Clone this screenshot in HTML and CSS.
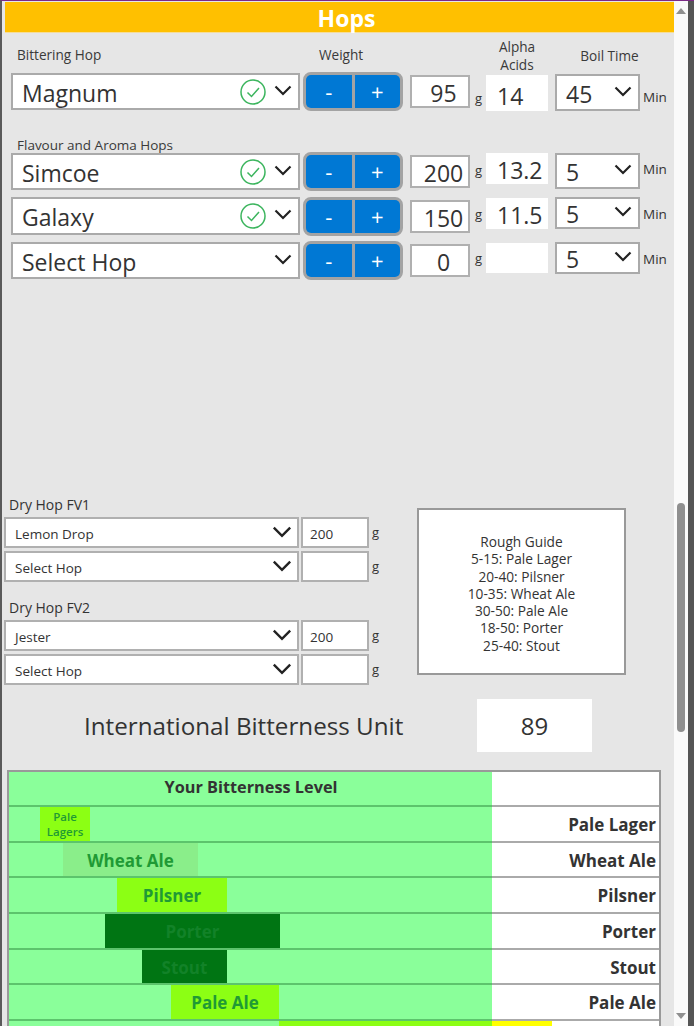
FILE: index.html
```html
<!DOCTYPE html>
<html lang="en">
<head>
<meta charset="utf-8">
<title>Hops</title>
<link rel="stylesheet" href="styles.css">
</head>
<body>
<svg class="defs" width="0" height="0" aria-hidden="true">
  <symbol id="chev" viewBox="0 0 18 11"><path d="M1.5 1.5 9 9l7.5-7.5" fill="none" stroke="#222" stroke-width="2.2"/></symbol>
  <symbol id="ok" viewBox="0 0 26 26"><circle cx="13" cy="13" r="12" fill="none" stroke="#3cb55e" stroke-width="1.5"/><path d="M7.5 13.5l4 4 7.5-8.5" fill="none" stroke="#3cb55e" stroke-width="1.5"/></symbol>
</svg>
<div class="window">
  <main class="app">
    <h1 class="title">Hops</h1>

    <div class="hop-grid labels">
      <div class="lbl lbl-hop">Bittering Hop</div>
      <div class="lbl lbl-weight">Weight</div>
      <div></div><div></div>
      <div class="lbl lbl-alpha">Alpha<br>Acids</div>
      <div class="lbl lbl-boil">Boil Time</div>
    </div>

    <div class="hop-grid row-a">
      <div class="select"><span>Magnum</span><svg class="ok"><use href="#ok"/></svg><svg class="chev"><use href="#chev"/></svg></div>
      <div class="stepper"><button class="step">-</button><button class="step">+</button></div>
      <div class="qty">95</div><div class="unit">g</div>
      <div class="alpha">14</div>
      <div class="boil"><span>45</span><svg class="chev"><use href="#chev"/></svg></div>
      <div class="min">Min</div>
    </div>

    <div class="lbl lbl-flavour">Flavour and Aroma Hops</div>

    <div class="hop-grid row-b">
      <div class="select"><span>Simcoe</span><svg class="ok"><use href="#ok"/></svg><svg class="chev"><use href="#chev"/></svg></div>
      <div class="stepper"><button class="step">-</button><button class="step">+</button></div>
      <div class="qty">200</div><div class="unit">g</div>
      <div class="alpha">13.2</div>
      <div class="boil"><span>5</span><svg class="chev"><use href="#chev"/></svg></div>
      <div class="min">Min</div>
    </div>
    <div class="hop-grid row-c">
      <div class="select"><span>Galaxy</span><svg class="ok"><use href="#ok"/></svg><svg class="chev"><use href="#chev"/></svg></div>
      <div class="stepper"><button class="step">-</button><button class="step">+</button></div>
      <div class="qty">150</div><div class="unit">g</div>
      <div class="alpha">11.5</div>
      <div class="boil"><span>5</span><svg class="chev"><use href="#chev"/></svg></div>
      <div class="min">Min</div>
    </div>
    <div class="hop-grid row-d">
      <div class="select"><span>Select Hop</span><svg class="chev"><use href="#chev"/></svg></div>
      <div class="stepper"><button class="step">-</button><button class="step">+</button></div>
      <div class="qty">0</div><div class="unit">g</div>
      <div class="alpha"></div>
      <div class="boil"><span>5</span><svg class="chev"><use href="#chev"/></svg></div>
      <div class="min">Min</div>
    </div>

    <section class="dry">
      <div class="dry-forms">
        <div class="dry-label">Dry Hop FV1</div>
        <div class="dry-row"><div class="dry-select"><span>Lemon Drop</span><svg class="chev"><use href="#chev"/></svg></div><div class="dry-qty">200</div><div class="dry-unit">g</div></div>
        <div class="dry-row"><div class="dry-select"><span>Select Hop</span><svg class="chev"><use href="#chev"/></svg></div><div class="dry-qty"></div><div class="dry-unit">g</div></div>
        <div class="dry-label dry-label-second">Dry Hop FV2</div>
        <div class="dry-row"><div class="dry-select"><span>Jester</span><svg class="chev"><use href="#chev"/></svg></div><div class="dry-qty">200</div><div class="dry-unit">g</div></div>
        <div class="dry-row"><div class="dry-select"><span>Select Hop</span><svg class="chev"><use href="#chev"/></svg></div><div class="dry-qty"></div><div class="dry-unit">g</div></div>
      </div>
      <div class="guide">Rough Guide<br>5-15: Pale Lager<br>20-40: Pilsner<br>10-35: Wheat Ale<br>30-50: Pale Ale<br>18-50: Porter<br>25-40: Stout</div>
    </section>

    <section class="ibu">
      <div class="ibu-label">International Bitterness Unit</div>
      <div class="ibu-value">89</div>
    </section>

    <section class="chart">
      <div class="chart-row chart-head"><div class="track"><b class="chart-title">Your Bitterness Level</b></div><div class="style"></div></div>
      <div class="chart-row"><div class="track"><div class="bar lime small" style="margin-left:31px;width:50px">Pale<br>Lagers</div></div><div class="style">Pale Lager</div></div>
      <div class="chart-row"><div class="track"><div class="bar wheat" style="margin-left:54px;width:135px">Wheat Ale</div></div><div class="style">Wheat Ale</div></div>
      <div class="chart-row"><div class="track"><div class="bar lime" style="margin-left:108px;width:110px">Pilsner</div></div><div class="style">Pilsner</div></div>
      <div class="chart-row"><div class="track"><div class="bar dark" style="margin-left:96px;width:175px">Porter</div></div><div class="style">Porter</div></div>
      <div class="chart-row"><div class="track"><div class="bar dark" style="margin-left:133px;width:85px">Stout</div></div><div class="style">Stout</div></div>
      <div class="chart-row"><div class="track"><div class="bar lime" style="margin-left:162px;width:108px">Pale Ale</div></div><div class="style">Pale Ale</div></div>
      <div class="chart-row"><div class="track"><div class="bar lime" style="margin-left:270px;width:213px"></div></div><div class="style"><div class="over"></div></div></div>
    </section>
  </main>
  <aside class="scrollbar">
    <div class="arrow-up"></div>
    <div class="thumb"></div>
    <div class="arrow-down"></div>
  </aside>
  <div class="edge"></div>
</div>
</body>
</html>
```

FILE: styles.css
```css
* { box-sizing: border-box; }
html, body { margin: 0; height: 1026px; overflow: hidden; }
body { font-family: "Open Sans", "Noto Sans", sans-serif; color: #333; background: #555; }
.defs { position: absolute; }

.window { height: 1026px; display: flex; border-top: 1px solid #7b2a86; overflow: hidden; border-left: 2px solid #5a5a5a; }
.app { width: 672px; background: #e6e6e6; padding-top: 1px; overflow: hidden; flex: none; }
.scrollbar { width: 14px; background: #fafafa; flex: none; display: flex; flex-direction: column; align-items: center; padding-top: 7px; }
.edge { flex: 1; background: #555; }
.arrow-up { width: 0; height: 0; border-left: 5px solid transparent; border-right: 5px solid transparent; border-bottom: 6px solid #8f8f8f; }
.thumb { width: 8px; height: 229px; margin-top: 489px; background: #8f8f8f; border-radius: 4px; }
.arrow-down { width: 0; height: 0; margin-top: 281px; border-left: 5px solid transparent; border-right: 5px solid transparent; border-top: 6px solid #8f8f8f; }

.title { margin: 0 0 0 3px; height: 31px; padding-left: 14px; background: #ffc000; border-bottom: 1px solid #f6dd98; color: #fff; font-size: 23px; font-weight: 700; line-height: 33px; text-align: center; }

.hop-grid { display: grid; grid-template-columns: 292px 107px 60px 16px 69px 88px 30px; margin-left: 9px; align-items: start; }
.labels { height: 39px; }
.lbl { font-size: 13.6px; line-height: 18px; color: #3a3a3a; }
.lbl-hop { margin: 13px 0 0 6px; }
.lbl-weight { margin-top: 13px; margin-left: 16px; }
.lbl-alpha { margin-top: 5px; text-align: center; width: 62px; }
.lbl-boil { margin: 14px 0 0 12px; width: 85px; text-align: center; white-space: nowrap; }

.select, .boil { background: #fff; border: 2px solid #aaa; display: flex; align-items: center; font-size: 23px; }
.select { width: 289px; height: 37px; padding: 2px 0 0 9px; margin-top: 1px; }
.select span { flex: 1; }
.ok { width: 26px; height: 26px; flex: none; margin: -2px 8px 0 0; }
.chev { width: 18px; height: 11px; flex: none; margin: -5px 6px 0 0; }
.stepper { width: 100px; height: 39px; border: 3px solid #a3a3a3; border-radius: 8px; background: #a3a3a3; display: grid; grid-template-columns: 1fr 1fr; gap: 3px; }
.step { border: 0; padding: 0 0 2px; margin: 0; background: #0078d4; color: #fff; font: 400 22px "Open Sans", sans-serif; }
.step:first-child { border-radius: 5px 0 0 5px; }
.step:last-child { border-radius: 0 5px 5px 0; }
.qty { width: 60px; height: 33px; margin-top: 3px; background: #fff; border: 2px solid #b0b0b0; font-size: 23px; line-height: 32px; text-align: center; padding-left: 7px; }
.unit { font-size: 13px; padding-left: 5px; line-height: 18px; }
.alpha { width: 62px; background: #fff; font-size: 23px; padding-left: 11px; }
.boil { width: 85px; padding: 2px 0 0 9px; }
.boil span { flex: 1; }
.min { font-size: 13.5px; line-height: 18px; margin-left: 0; width: 40px; }

.row-a { height: 67px; }
.row-a .unit { margin-top: 17px; }
.row-a .alpha { margin-top: 3px; height: 36px; line-height: 38px; }
.row-a .boil { margin-top: 2px; height: 37px; }
.row-a .min { margin-top: 16px; }

.lbl-flavour { margin-left: 15px; height: 13px; line-height: 12px; font-size: 13.5px; }

.row-b, .row-c, .row-d { height: 44px; }
.row-b { height: 45px; }
.row-b .unit { margin-top: 9px; }
.row-c .unit { margin-top: 8px; }
.row-d .unit { margin-top: 8px; }
.alpha { height: 31px; margin-top: 1px; line-height: 31px; padding-top: 2px; }
.row-b .boil { margin-top: 1px; height: 36px; }
.row-c .select { margin-top: 0; height: 38px; }
.row-c .boil { margin-top: 0; height: 32px; }
.row-d .boil { margin-top: 1px; height: 32px; }
.row-d .alpha { margin-top: 2px; height: 30px; }
.row-b .min, .row-c .min { margin-top: 8px; }
.row-d .min { margin-top: 9px; }

.dry { display: flex; margin: 211px 0 0 2px; }
.dry-forms { width: 413px; }
.dry-label { font-size: 14px; line-height: 18px; height: 21px; margin-left: 5px; }
.dry-label-second { margin-top: 14px; }
.dry-row { display: flex; align-items: flex-start; height: 34px; }
.dry-select { width: 295px; height: 31px; background: #fff; border: 2px solid #b0b0b0; display: flex; align-items: center; padding: 3px 0 0 9px; font-size: 13.5px; }
.dry-select span { flex: 1; }
.dry-select .chev { width: 20px; height: 12px; margin: -5px 5px 0 0; }
.dry-qty { width: 68px; height: 31px; margin-left: 2px; background: #fff; border: 2px solid #b0b0b0; padding-left: 7px; font-size: 13.5px; line-height: 30px; }
.dry-unit { font-size: 13px; line-height: 31px; margin-left: 3px; }
.guide { width: 209px; height: 167px; margin-top: 12px; background: #fff; border: 2px solid #999; font-size: 13.7px; line-height: 17.2px; text-align: center; display: flex; align-items: center; justify-content: center; padding-top: 4px; }

.ibu { display: flex; align-items: center; margin: 11px 0 0 0; height: 53px; }
.ibu-label { width: 475px; padding-left: 82px; font-size: 24.2px; white-space: nowrap; }
.ibu-value { width: 115px; height: 53px; background: #fff; font-size: 24px; line-height: 53px; text-align: center; }

.chart { width: 654px; margin: 18px 0 0 5px; border: 2px solid #999; border-bottom: 0; background: #fff; }
.chart-row { display: grid; grid-template-columns: 483px 1fr; height: 35.7px; }
.chart-head { height: 35px; }
.track { background: #8aff9a; border-bottom: 2px solid #5cc46c; display: flex; overflow: hidden; }
.chart-head .track { justify-content: center; align-items: center; padding-bottom: 4px; }
.chart-title { font-size: 16.3px; font-weight: 700; white-space: nowrap; padding-left: 1px; }
.style { border-bottom: 2px solid #aaa; font-size: 17px; font-weight: 700; text-align: right; padding: 5px 3px 0 0; line-height: 26px; white-space: nowrap; }
.bar { height: 100%; font-size: 17px; font-weight: 700; color: #1f9a35; text-align: center; line-height: 35px; flex: none; }
.lime { background: #8cff14; }
.wheat { background: #8aee8a; }
.dark { background: #007513; color: #128228; }
.small { font-size: 11.5px; line-height: 14.5px; padding-top: 3px; font-weight: 600; }
.over { width: 60px; height: 100%; background: #ffff00; }
.chart-row:last-child .style { padding: 0; }
.chart-row:last-child .track { border: 0; }
```
